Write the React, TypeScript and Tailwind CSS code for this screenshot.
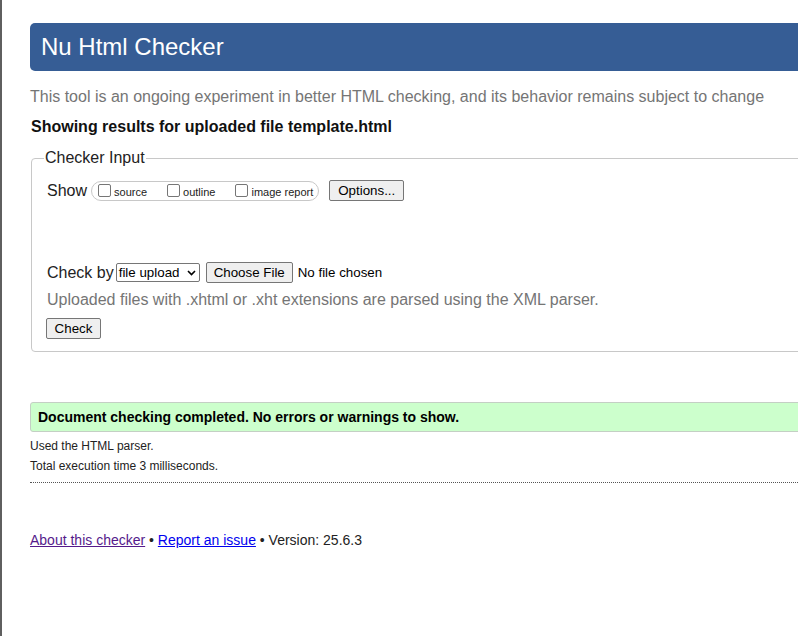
import React from "react";

function Box({ label }: { label: string }) {
  return (
    <label className="flex items-center">
      <span className="block h-[13px] w-[13px] rounded-[2px] border border-[#767676] bg-white" />
      <span className="ml-[3px] translate-y-[2px] text-[11px] leading-[13px]">{label}</span>
    </label>
  );
}

function NativeButton({ children, className = "" }: { children: React.ReactNode; className?: string }) {
  return (
    <button
      type="button"
      className={
        "flex items-center justify-center rounded-[2px] border border-[#767676] bg-[#efefef] text-[13.33px] text-black " +
        className
      }
    >
      {children}
    </button>
  );
}

export default function App() {
  return (
    <div className="h-[636px] w-[798px] overflow-hidden border-l-2 border-[#5f5f5f] bg-white font-['Liberation_Sans',Arial,sans-serif] text-[#222]">
      <div className="w-[840px] pl-[28px] pt-[23px]">
        <h1 className="flex h-[48px] items-center rounded-[5px] bg-[#365d95] pl-[11px] text-[24px] font-normal text-white">
          Nu Html Checker
        </h1>
        <p className="mt-[17px] text-[16px] leading-[18px] text-[#757575]">
          This tool is an ongoing experiment in better HTML checking, and its behavior remains subject to change
        </p>
        <p className="mt-[12px] pl-[1px] text-[16px] font-bold leading-[18px] text-[#111]">
          Showing results for uploaded file template.html
        </p>

        <fieldset className="mt-[13px] ml-[1px] rounded-[4px] border border-[#c8c8c8] pb-[12px] pl-[15px]">
          <legend className="-ml-[3px] px-[1px] text-[16px] leading-[18px]">Checker Input</legend>
          <div className="mt-[13px] flex items-center">
            <span className="text-[16px] leading-[18px]">Show</span>
            <div className="ml-[4px] flex h-[20px] items-center gap-[20px] rounded-full border border-[#c8c8c8] pl-[6px] pr-[5px]">
              <Box label="source" />
              <Box label="outline" />
              <Box label="image report" />
            </div>
            <NativeButton className="ml-[10px] h-[21px] w-[75px]">Options...</NativeButton>
          </div>

          <div className="mt-[61px] flex items-center">
            <span className="text-[16px] leading-[18px]">Check by</span>
            <div className="ml-[2px] flex h-[19px] w-[84px] items-center justify-between rounded-[2px] border border-[#767676] bg-white pl-[2px] pr-[3px] text-[13.33px] text-black">
              <span>file upload</span>
              <svg width="9" height="6" viewBox="0 0 9 6" fill="none">
                <path d="M1 1l3.5 3.5L8 1" stroke="#000" strokeWidth="1.6" />
              </svg>
            </div>
            <NativeButton className="ml-[6px] h-[21px] w-[87px]">Choose File</NativeButton>
            <span className="ml-[5px] text-[13.33px] text-black">No file chosen</span>
          </div>

          <p className="mt-[8px] text-[16px] leading-[18px] text-[#757575]">
            Uploaded files with .xhtml or .xht extensions are parsed using the XML parser.
          </p>
          <NativeButton className="mt-[9px] -ml-[1px] h-[21px] w-[55px]">Check</NativeButton>
        </fieldset>

        <div className="mt-[50px] flex h-[30px] items-center rounded-[3px] border border-[#c4cfc4] bg-[#ccffcc] pl-[7px] text-[14px] font-bold text-black">
          Document checking completed. No errors or warnings to show.
        </div>
        <p className="mt-[7px] text-[12px] leading-[14px]">Used the HTML parser.</p>
        <p className="mt-[6px] text-[12px] leading-[14px]">Total execution time 3 milliseconds.</p>
        <div className="mt-[9px] border-t border-dotted border-[#555]" />

        <p className="mt-[49px] text-[14px] leading-[16px]">
          <a href="#" className="text-[#551a8b] underline">
            About this checker
          </a>{" "}
          •{" "}
          <a href="#" className="text-[#0000ee] underline">
            Report an issue
          </a>{" "}
          • Version: 25.6.3
        </p>
      </div>
    </div>
  );
}
